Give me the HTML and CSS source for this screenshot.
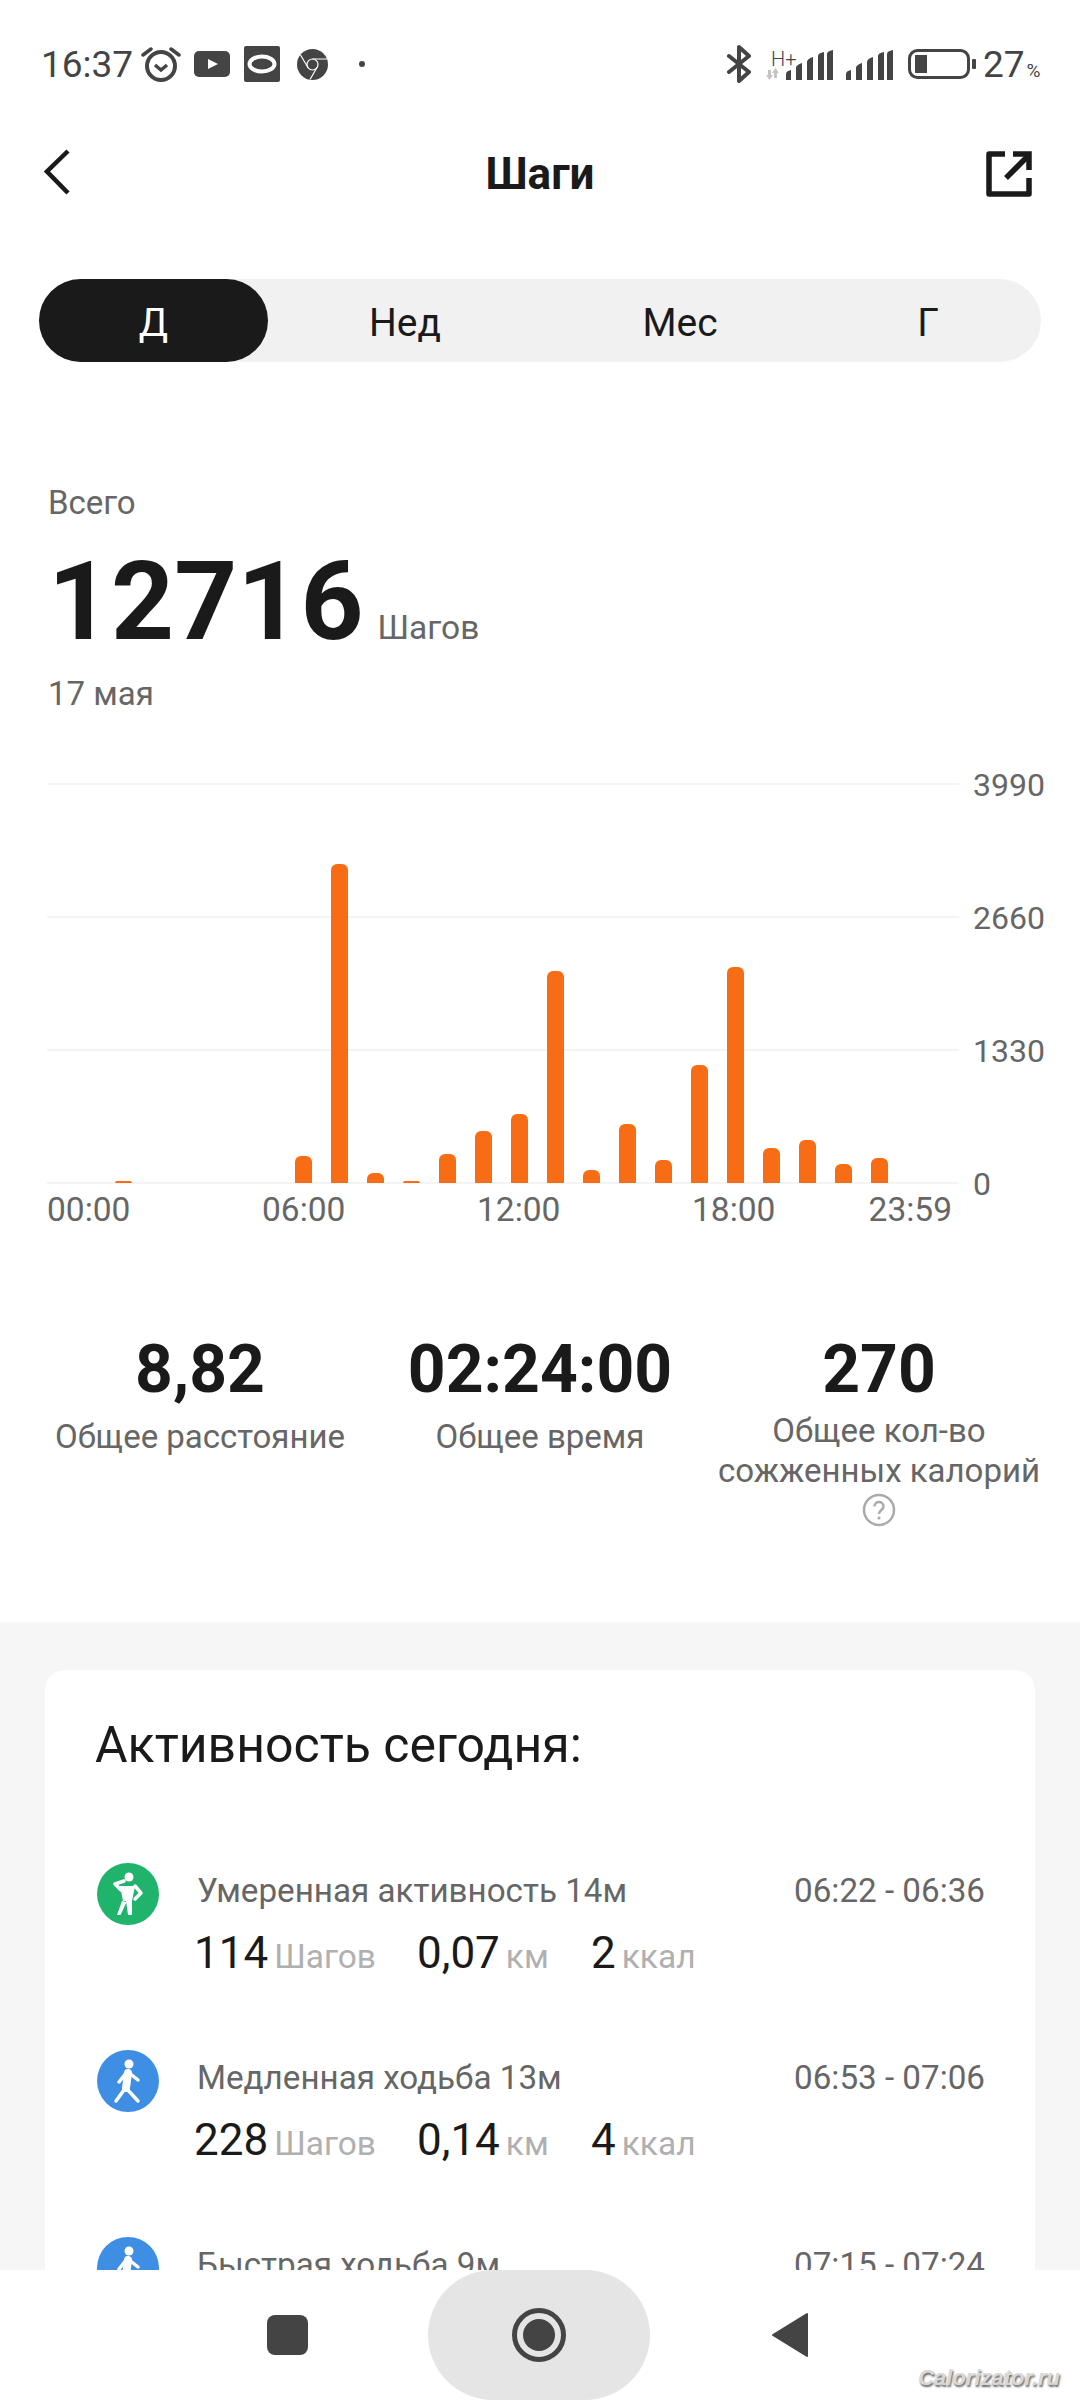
FILE: index.html
```html
<!DOCTYPE html>
<html lang="ru">
<head>
    <meta charset="UTF-8">
    <title>Шаги</title>
    <link rel="stylesheet" href="styles.css">
</head>
<body>
<div class="phone">
    <div class="main">
        <div class="status">
            <span class="clock">16:37</span>
            <svg class="st-alarm" width="40" height="36" viewBox="0 0 40 36"><circle cx="20" cy="20" r="14" fill="none" stroke="#444" stroke-width="4"/><path d="M14 19l6 5 6-5" fill="none" stroke="#444" stroke-width="3.5"/><path d="M2 9l8-6M38 9l-8-6" stroke="#444" stroke-width="3.5" stroke-linecap="round"/></svg>
            <svg class="st-yt" width="36" height="26" viewBox="0 0 36 26"><rect width="36" height="26" rx="5" fill="#444"/><path d="M14 8l10 5-10 5z" fill="#fff"/></svg>
            <svg class="st-box" width="36" height="36" viewBox="0 0 36 36"><rect width="36" height="36" rx="2" fill="#444"/><ellipse cx="18" cy="18" rx="12.5" ry="7.5" fill="none" stroke="#fff" stroke-width="4"/></svg>
            <svg class="st-chrome" width="31" height="31" viewBox="0 0 31 31"><circle cx="15.5" cy="15.5" r="15.5" fill="#444"/><circle cx="15.5" cy="15.5" r="5.5" fill="none" stroke="#fff" stroke-width="1.2"/><path d="M15.5 10H30M11 18.5L3.5 6M20 18.5L13 30.5" stroke="#fff" stroke-width="1.2" fill="none"/></svg>
            <span class="st-dot"></span>
            <svg class="st-bt" width="25" height="38" viewBox="0 0 25 38"><path d="M2 11l20 16-10 9V2l10 9L2 27" fill="none" stroke="#444" stroke-width="4" stroke-linejoin="round" stroke-linecap="round"/></svg>
            <div class="st-net">
                <span class="st-h">H+</span>
                <svg width="16" height="12" viewBox="0 0 16 12"><path d="M2 2h3v5h2l-3.500 5L0 7h2zM11 10H8V5H6l3.500-5L13 5h-2z" fill="#c4c4c4"/></svg>
            </div>
            <svg class="st-sig1" width="47" height="30" viewBox="0 0 47 30"><path d="M0 24q0-3 5-4v10H0zM10 18q0-3 6-5v17h-6zM21 12q0-3 6-5v23h-6zM32 6q0-3 6-4v28h-6zM41 4q0-3 6-4v30h-6z" fill="#444"/></svg>
            <svg class="st-sig2" width="47" height="30" viewBox="0 0 47 30"><path d="M0 24q0-3 5-4v10H0zM10 18q0-3 6-5v17h-6zM21 12q0-3 6-5v23h-6zM32 6q0-3 6-4v28h-6zM41 4q0-3 6-4v30h-6z" fill="#444"/></svg>
            <svg class="st-bat" width="68" height="30" viewBox="0 0 68 30"><rect x="1.500" y="1.500" width="59" height="27" rx="8" fill="none" stroke="#444" stroke-width="3"/><rect x="7" y="6" width="12" height="18" fill="#444"/><rect x="64" y="10" width="4" height="10" rx="1" fill="#444"/></svg>
            <span class="st-pct">27<small>%</small></span>
        </div>

        <div class="topbar">
            <svg class="back" width="26" height="46" viewBox="0 0 26 46"><path d="M24 2L3 22.500 24 44" fill="none" stroke="#1a1a1a" stroke-width="4.500"/></svg>
            <h1 class="title">Шаги</h1>
            <svg width="46" height="46" viewBox="0 0 46 46"><path d="M19 3H3v40h40V27" fill="none" stroke="#1a1a1a" stroke-width="5.500" stroke-linejoin="round"/><path d="M20 27L41 6" stroke="#1a1a1a" stroke-width="5.500"/><path d="M27 3h16v16" fill="none" stroke="#1a1a1a" stroke-width="5.500"/></svg>
        </div>

        <div class="tabs">
            <div class="tab tab-day active">Д</div>
            <div class="tab tab-week">Нед</div>
            <div class="tab tab-month">Мес</div>
            <div class="tab tab-year">Г</div>
        </div>

        <div class="summary">
            <p class="muted">Всего</p>
            <p class="total"><b>12716</b><span>Шагов</span></p>
            <p class="muted date">17 мая</p>
        </div>

        <div class="chart">
            <div class="chart-left">
                <div class="plot">
                    <div class="bar" style="height:0"></div>
                    <div class="bar" style="height:2px"></div>
                    <div class="bar" style="height:0"></div>
                    <div class="bar" style="height:0"></div>
                    <div class="bar" style="height:0"></div>
                    <div class="bar" style="height:0"></div>
                    <div class="bar" style="height:27px"></div>
                    <div class="bar" style="height:319px"></div>
                    <div class="bar" style="height:10px"></div>
                    <div class="bar" style="height:2px"></div>
                    <div class="bar" style="height:29px"></div>
                    <div class="bar" style="height:52px"></div>
                    <div class="bar" style="height:69px"></div>
                    <div class="bar" style="height:212px"></div>
                    <div class="bar" style="height:13px"></div>
                    <div class="bar" style="height:59px"></div>
                    <div class="bar" style="height:23px"></div>
                    <div class="bar" style="height:118px"></div>
                    <div class="bar" style="height:216px"></div>
                    <div class="bar" style="height:35px"></div>
                    <div class="bar" style="height:43px"></div>
                    <div class="bar" style="height:19px"></div>
                    <div class="bar" style="height:25px"></div>
                    <div class="bar" style="height:0"></div>
                </div>
                <div class="xlabels">
                    <span>00:00</span>
                    <span>06:00</span>
                    <span>12:00</span>
                    <span>18:00</span>
                    <span>23:59</span>
                </div>
            </div>
            <div class="ylabels">
                <span>3990</span>
                <span>2660</span>
                <span>1330</span>
                <span>0</span>
            </div>
        </div>

        <div class="stats">
            <div class="stat">
                <div class="stat-val">8,82</div>
                <div class="stat-name">Общее расстояние</div>
            </div>
            <div class="stat">
                <div class="stat-val">02:24:00</div>
                <div class="stat-name">Общее время</div>
            </div>
            <div class="stat">
                <div class="stat-val">270</div>
                <div class="stat-name tight">Общее кол-во сожженных калорий</div>
                <svg class="help" width="34" height="34" viewBox="0 0 34 34"><circle cx="17" cy="17" r="15" fill="none" stroke="#aaa" stroke-width="2.500"/><path d="M12.500 13.500c0-6 9-6 9 0 0 3.500-4.500 3.500-4.500 7.500" fill="none" stroke="#aaa" stroke-width="2.500"/><circle cx="17" cy="25" r="1.600" fill="#aaa"/></svg>
            </div>
        </div>

        <div class="lower">
            <div class="card">
                <h2 class="card-title">Активность сегодня:</h2>

                <div class="row">
                    <svg class="act-icon" width="62" height="62" viewBox="0 0 62 62"><circle cx="31" cy="31" r="31" fill="#1fb36b"/><circle cx="32" cy="14" r="4.500" fill="#fff"/><path d="M27 18l-9 3 6 6M38 23l6 7-6 6" fill="none" stroke="#fff" stroke-width="3.500" stroke-linejoin="round" stroke-linecap="round"/><path d="M23 23h15l-3 15h-9zM25 38l-5 14h3.500l6-13zM29 38h6l0 14h-4z" fill="#fff"/></svg>
                    <div class="row-body">
                        <div class="row-top"><span>Умеренная активность 14м</span><span>06:22 - 06:36</span></div>
                        <div class="row-nums">
                            <div><b>114</b><span>Шагов</span></div>
                            <div><b>0,07</b><span>км</span></div>
                            <div><b>2</b><span>ккал</span></div>
                        </div>
                    </div>
                </div>

                <div class="row">
                    <svg class="act-icon" width="62" height="62" viewBox="0 0 62 62"><circle cx="31" cy="31" r="31" fill="#3e8ee4"/><circle cx="32" cy="14" r="4.500" fill="#fff"/><path d="M31 23l-2 15" stroke="#fff" stroke-width="8" stroke-linecap="round"/><path d="M30 22l-8 10M31 22l10 8M29 38l12 13M27 40l-8 11" fill="none" stroke="#fff" stroke-width="3.500" stroke-linecap="round" stroke-linejoin="round"/></svg>
                    <div class="row-body">
                        <div class="row-top"><span>Медленная ходьба 13м</span><span>06:53 - 07:06</span></div>
                        <div class="row-nums">
                            <div><b>228</b><span>Шагов</span></div>
                            <div><b>0,14</b><span>км</span></div>
                            <div><b>4</b><span>ккал</span></div>
                        </div>
                    </div>
                </div>

                <div class="row">
                    <svg class="act-icon" width="62" height="62" viewBox="0 0 62 62"><circle cx="31" cy="31" r="31" fill="#3e8ee4"/><circle cx="32" cy="14" r="4.500" fill="#fff"/><path d="M31 23l-2 15" stroke="#fff" stroke-width="8" stroke-linecap="round"/><path d="M30 22l-8 10M31 22l10 8M29 38l12 13M27 40l-8 11" fill="none" stroke="#fff" stroke-width="3.500" stroke-linecap="round" stroke-linejoin="round"/></svg>
                    <div class="row-body">
                        <div class="row-top"><span>Быстрая ходьба 9м</span><span>07:15 - 07:24</span></div>
                    </div>
                </div>
            </div>
        </div>
    </div>

    <div class="navbar">
        <div class="nav-square"></div>
        <div class="nav-home">
            <div class="nav-ring"></div>
        </div>
        <svg class="nav-back" width="38" height="46" viewBox="0 0 38 46"><path d="M36 2v42L2 23z" fill="#444" stroke="#444" stroke-width="2" stroke-linejoin="round"/></svg>
    </div>

    <div class="watermark">Calorizator.ru</div>
</div>
</body>
</html>
```

FILE: styles.css
```css
* {
    box-sizing: border-box;
}
body {
    margin: 0;
    font-family: Roboto, "Noto Sans", sans-serif;
    color: #1a1a1a;
    background: #fff;
}
p, h1, h2 {
    margin: 0;
}
.phone {
    position: relative;
    width: 1080px;
    height: 2400px;
    display: flex;
    flex-direction: column;
    overflow: hidden;
}
.main {
    flex: 1;
    min-height: 0;
    overflow: hidden;
}

/* status bar */
.status {
    height: 128px;
    padding-left: 41px;
    display: flex;
    align-items: center;
    color: #444;
}
.clock {
    font-size: 37px;
    width: 100px;
}
.st-yt {
    margin-left: 13px;
}
.st-box {
    margin-left: 14px;
}
.st-chrome {
    margin-left: 17px;
}
.st-dot {
    width: 6px;
    height: 6px;
    border-radius: 50%;
    background: #444;
    margin-left: 31px;
}
.st-bt {
    margin-left: 362px;
}
.st-net {
    width: 32px;
    margin-left: 14px;
    margin-top: 2px;
    display: flex;
    flex-direction: column;
}
.st-h {
    font-size: 20px;
    line-height: 18px;
    padding-left: 5px;
    font-weight: 300;
}
.st-sig1 {
    margin-left: -12px;
    margin-top: 2px;
}
.st-sig2 {
    margin-left: 13px;
    margin-top: 2px;
}
.st-bat {
    margin-left: 15px;
}
.st-pct {
    font-size: 37px;
    margin-left: 7px;
}
.st-pct small {
    font-size: 19px;
    margin-left: 2px;
}

/* header */
.topbar {
    height: 92px;
    padding: 0 48px 0 44px;
    display: flex;
    align-items: center;
    justify-content: space-between;
}
.back {
    margin-top: -5px;
}
.title {
    font-size: 44px;
    font-weight: 700;
    margin-left: 24px;
}
.tabs {
    margin: 59px 39px 0 39px;
    height: 83px;
    background: #f1f1f1;
    border-radius: 42px;
    display: flex;
}
.tab {
    font-size: 39px;
    padding-top: 5px;
    display: flex;
    align-items: center;
    justify-content: center;
}
.tab-day {
    width: 229px;
    margin-right: 0;
}
.tab-week {
    width: 146px;
    margin-left: 64px;
}
.tab-month {
    width: 146px;
    margin-left: 129px;
}
.tab-year {
    width: 100px;
    margin-left: 125px;
}
.active {
    background: #1a1a1a;
    color: #fff;
    border-radius: 42px;
}

/* total */
.summary {
    margin-top: 121px;
    padding-left: 48px;
}
.muted {
    font-size: 33px;
    line-height: 40px;
    color: #666;
}
.total {
    margin-top: 24px;
    display: flex;
    align-items: baseline;
}
.total b {
    font-size: 110px;
    font-weight: 700;
    line-height: 110px;
}
.total span {
    font-size: 33.5px;
    line-height: 34px;
    color: #666;
    margin-left: 14px;
}
.date {
    margin-top: 17px;
}

/* chart */
.chart {
    margin-top: 69px;
    padding-left: 47px;
    display: flex;
    align-items: flex-start;
}
.chart-left {
    width: 912px;
}
.plot {
    height: 401px;
    padding: 0 0 1px 32px;
    display: flex;
    align-items: flex-end;
    background: repeating-linear-gradient(to bottom, #f4f4f4 0, #f4f4f4 2px, transparent 2px, transparent 133px);
}
.bar {
    width: 17px;
    margin-right: 19px;
    background: #f76d16;
    border-radius: 6px 6px 0 0;
}
.xlabels {
    margin-top: 6px;
    width: 905px;
    display: grid;
    grid-template-columns: repeat(3, 215px) 1fr auto;
    font-size: 33.5px;
    line-height: 40px;
    color: #666;
}
.ylabels {
    margin-top: -18px;
    margin-left: 14px;
    display: grid;
    grid-auto-rows: 133px;
    font-size: 32px;
    line-height: 40px;
    color: #666;
}

/* stats */
.stats {
    margin-top: 35px;
    padding-left: 45px;
    display: grid;
    grid-template-columns: 310px 370px 308px;
    height: 290px;
}
.stat {
    text-align: center;
}
.stat-val {
    font-size: 66px;
    font-weight: 700;
    line-height: 76px;
}
.stat-name {
    margin-top: 9px;
    font-size: 33px;
    line-height: 40px;
    color: #666;
}
.tight {
    margin-top: 3px;
    margin-left: -12px;
    margin-right: -12px;
}
.help {
    display: block;
    margin: 2px auto 0 auto;
}

/* activity card */
.lower {
    background: #f6f6f6;
    padding: 48px 45px 0 45px;
    height: 750px;
}
.card {
    background: #fff;
    border-radius: 20px;
    padding: 45px 50px 0 50px;
    height: 702px;
}
.card-title {
    font-size: 50px;
    font-weight: 400;
    line-height: 60px;
    margin-bottom: 88px;
}
.row {
    height: 187px;
    display: flex;
    align-items: flex-start;
}
.act-icon {
    margin: 0 38px 0 2px;
    flex-shrink: 0;
}
.row-body {
    flex: 1;
}
.row-top {
    display: flex;
    justify-content: space-between;
    font-size: 33.2px;
    line-height: 40px;
    color: #666;
    margin-top: 8px;
}
.row-nums {
    display: grid;
    grid-template-columns: 223px 174px auto;
    margin-left: -3px;
    margin-top: 17px;
    line-height: 50px;
}
.row-nums b {
    font-size: 44px;
    font-weight: 400;
}
.row-nums span {
    font-size: 33.5px;
    color: #b0b0b0;
    margin-left: 6px;
}

/* bottom nav */
.navbar {
    height: 130px;
    background: #fff;
    display: flex;
    align-items: center;
    flex-shrink: 0;
    padding-left: 267px;
}
.nav-square {
    width: 41px;
    height: 40px;
    border-radius: 8px;
    background: #444;
}
.nav-home {
    width: 222px;
    height: 130px;
    margin-left: 120px;
    border-radius: 85px;
    background: #e5e5e5;
    display: flex;
    align-items: center;
    justify-content: center;
}
.nav-ring {
    width: 54px;
    height: 54px;
    border-radius: 50%;
    border: 5px solid #444;
    padding: 6px;
    background: #444;
    background-clip: content-box;
}
.nav-back {
    margin-left: 121px;
}
.watermark {
    position: absolute;
    right: 20px;
    bottom: 9px;
    font-family: "Liberation Sans", sans-serif;
    font-size: 22px;
    font-weight: 700;
    font-style: italic;
    color: #d8d8d8;
    text-shadow: 1px 2px 2px #666;
}
```
